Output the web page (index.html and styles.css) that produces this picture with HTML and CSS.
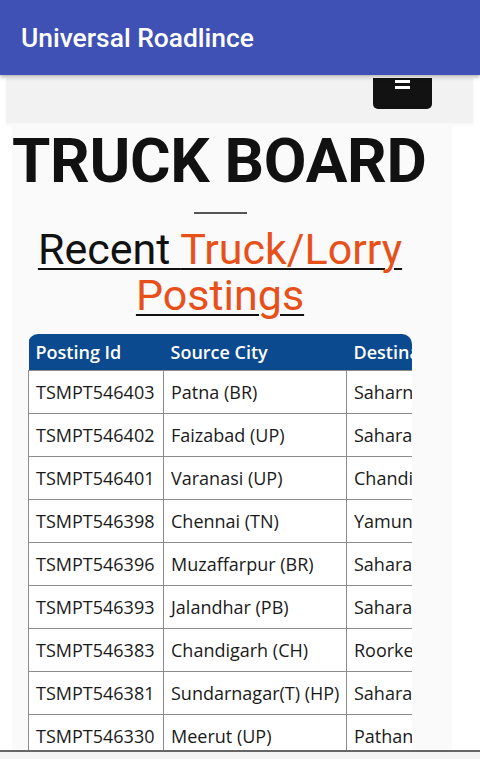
FILE: index.html
```html
<!DOCTYPE html>
<html lang="en">
<head>
    <meta charset="UTF-8">
    <meta name="viewport" content="width=device-width, initial-scale=1.0">
    <title>Universal Roadlince</title>
    <link rel="stylesheet" href="styles.css">
</head>
<body>

    <div class="app-bar">
        <span class="app-title">Universal Roadlince</span>
    </div>

    <div class="webview">
        <!-- top nav with menu toggle -->
        <div class="navbar">
            <div class="menu-toggle">
                <span class="bar"></span>
                <span class="bar"></span>
            </div>
        </div>

        <div class="content">
            <h1 class="board-title">TRUCK BOARD</h1>
            <div class="divider"></div>
            <h2 class="section-title">
                <a href="#">Recent <span class="accent">Truck/Lorry Postings</span></a>
            </h2>

            <div class="table-wrap">
                <table class="postings">
                    <thead>
                        <tr>
                            <th class="col-id">Posting Id</th>
                            <th class="col-src">Source City</th>
                            <th class="col-dest">Destination City</th>
                        </tr>
                    </thead>
                    <tbody>
                        <tr><td>TSMPT546403</td><td>Patna (BR)</td><td>Saharnpur (UP)</td></tr>
                        <tr><td>TSMPT546402</td><td>Faizabad (UP)</td><td>Saharanpur (UP)</td></tr>
                        <tr><td>TSMPT546401</td><td>Varanasi (UP)</td><td>Chandigarh (CH)</td></tr>
                        <tr><td>TSMPT546398</td><td>Chennai (TN)</td><td>Yamunanagar (HR)</td></tr>
                        <tr><td>TSMPT546396</td><td>Muzaffarpur (BR)</td><td>Saharanpur (UP)</td></tr>
                        <tr><td>TSMPT546393</td><td>Jalandhar (PB)</td><td>Saharanpur (UP)</td></tr>
                        <tr><td>TSMPT546383</td><td>Chandigarh (CH)</td><td>Roorkee (UK)</td></tr>
                        <tr><td>TSMPT546381</td><td>Sundarnagar(T) (HP)</td><td>Saharanpur (UP)</td></tr>
                        <tr><td>TSMPT546330</td><td>Meerut (UP)</td><td>Pathankot (PB)</td></tr>
                        <tr><td>TSMPT546329</td><td>Delhi (DL)</td><td>Saharanpur (UP)</td></tr>
                    </tbody>
                </table>
            </div>
        </div>
    </div>

    <div class="bottom-edge"></div>

</body>
</html>
```

FILE: styles.css
```css
body {
    margin: 0;
    background-color: #ffffff;
    font-family: Roboto, "Liberation Sans", sans-serif;
    overflow: hidden;
}

/* Android style app bar */
.app-bar {
    position: relative;
    z-index: 2;
    height: 75px;
    padding-left: 21px;
    display: flex;
    align-items: center;
    background-color: #3F51B5;
    box-shadow: 0 2px 4px rgba(0, 0, 0, 0.3);
}

.app-title {
    color: white;
    font-size: 26.4px;
    font-weight: 500;
}

.webview {
    height: 675px;
    overflow: hidden;
    background-color: #ffffff;
}

.navbar {
    height: 45px;
    margin: 3px 7px 0 6px;
    display: flex;
    justify-content: flex-end;
    align-items: flex-start;
    padding-right: 41px;
    background-color: #f2f2f2;
    box-shadow: 0 2px 3px rgba(0, 0, 0, 0.04);
}

.menu-toggle {
    width: 59px;
    height: 31px;
    display: flex;
    flex-direction: column;
    align-items: center;
    gap: 3px;
    padding-top: 2px;
    box-sizing: border-box;
    background-color: #121212;
    border-radius: 0 0 5px 5px;
}

.menu-toggle .bar {
    width: 15px;
    height: 3px;
    background-color: white;
}

.content {
    width: 416px;
    margin-left: 12px;
    padding: 4px 24px 0 0;
    background-color: #fafafa;
}

.board-title {
    margin: 0;
    font-size: 62px;
    font-weight: bold;
    color: #111;
    line-height: 68px;
    letter-spacing: -0.3px;
    white-space: nowrap;
}

.divider {
    width: 53px;
    height: 2px;
    margin: 17px auto 0;
    background-color: #555;
}

.section-title {
    margin: 12px 0 0;
    text-align: center;
    font-size: 43px;
    font-weight: normal;
    line-height: 46px;
}

.section-title a {
    color: #111;
    text-decoration: underline;
    text-decoration-thickness: 2px;
    text-underline-offset: 4px;
}

.section-title .accent {
    color: #E8501A;
}

.table-wrap {
    width: 384px;
    margin: 16px 16px 0;
    overflow: hidden;
    border-radius: 10px 10px 0 0;
}

.postings {
    width: 520px;
    table-layout: fixed;
    border-collapse: collapse;
    font-family: "Open Sans", "Noto Sans", sans-serif;
    font-size: 18px;
    color: #1a1a1a;
    white-space: nowrap;
}

.postings th {
    height: 36px;
    padding: 0 7px;
    text-align: left;
    font-size: 18px;
    font-weight: 600;
    color: white;
    background-color: #0B4A8E;
}

.postings td {
    height: 42px;
    padding: 0 7px;
    border: 1px solid #8c8c8c;
    background-color: white;
    overflow: hidden;
}

.col-id {
    width: 121px;
}

.col-src {
    width: 169px;
}

.bottom-edge {
    height: 9px;
    border-top: 2px solid #666;
    background-color: #f4f4f4;
}
```
